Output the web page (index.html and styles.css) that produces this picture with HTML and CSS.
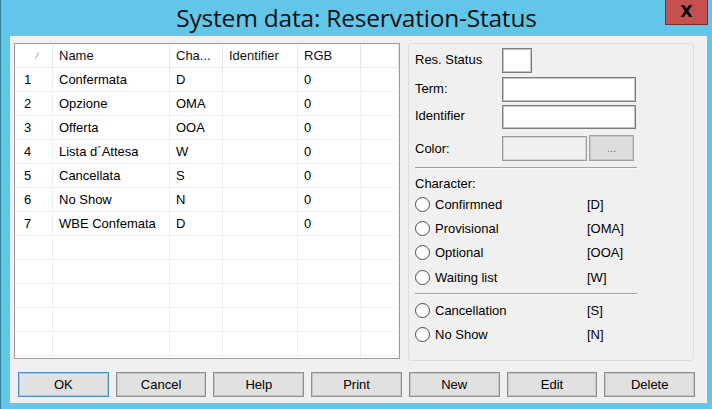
FILE: index.html
```html
<!DOCTYPE html>
<html>
<head>
<meta charset="utf-8">
<link rel="stylesheet" href="styles.css">
</head>
<body>
<div class="window">
  <div class="titlebar">
    <div></div>
    <div class="title">System data: Reservation-Status</div>
    <div class="tb-right"><div class="close">X</div></div>
  </div>
  <div class="client">
    <div class="main">
      <div class="grid">
        <div class="row head">
          <div class="cell num"><svg class="sort" width="4" height="7" viewBox="0 0 4 7"><path d="M0.5 6.5 L3.5 0.5" stroke="#9a9a9a" stroke-width="1"/></svg></div>
          <div class="cell">Name</div>
          <div class="cell">Cha...</div>
          <div class="cell">Identifier</div>
          <div class="cell">RGB</div>
          <div class="cell"></div>
        </div>
        <div class="row"><div class="cell num">1</div><div class="cell">Confermata</div><div class="cell">D</div><div class="cell"></div><div class="cell">0</div><div class="cell"></div></div>
        <div class="row"><div class="cell num">2</div><div class="cell">Opzione</div><div class="cell">OMA</div><div class="cell"></div><div class="cell">0</div><div class="cell"></div></div>
        <div class="row"><div class="cell num">3</div><div class="cell">Offerta</div><div class="cell">OOA</div><div class="cell"></div><div class="cell">0</div><div class="cell"></div></div>
        <div class="row"><div class="cell num">4</div><div class="cell">Lista d´Attesa</div><div class="cell">W</div><div class="cell"></div><div class="cell">0</div><div class="cell"></div></div>
        <div class="row"><div class="cell num">5</div><div class="cell">Cancellata</div><div class="cell">S</div><div class="cell"></div><div class="cell">0</div><div class="cell"></div></div>
        <div class="row"><div class="cell num">6</div><div class="cell">No Show</div><div class="cell">N</div><div class="cell"></div><div class="cell">0</div><div class="cell"></div></div>
        <div class="row"><div class="cell num">7</div><div class="cell">WBE Confemata</div><div class="cell">D</div><div class="cell"></div><div class="cell">0</div><div class="cell"></div></div>
        <div class="row"><div class="cell"></div><div class="cell"></div><div class="cell"></div><div class="cell"></div><div class="cell"></div><div class="cell"></div></div>
        <div class="row"><div class="cell"></div><div class="cell"></div><div class="cell"></div><div class="cell"></div><div class="cell"></div><div class="cell"></div></div>
        <div class="row"><div class="cell"></div><div class="cell"></div><div class="cell"></div><div class="cell"></div><div class="cell"></div><div class="cell"></div></div>
        <div class="row"><div class="cell"></div><div class="cell"></div><div class="cell"></div><div class="cell"></div><div class="cell"></div><div class="cell"></div></div>
        <div class="row"><div class="cell"></div><div class="cell"></div><div class="cell"></div><div class="cell"></div><div class="cell"></div><div class="cell"></div></div>
        <div class="row"><div class="cell"></div><div class="cell"></div><div class="cell"></div><div class="cell"></div><div class="cell"></div><div class="cell"></div></div>
      </div>
      <div class="panel">
        <div class="frow r1"><div class="flabel">Res. Status</div><div class="box small"></div></div>
        <div class="frow r2"><div class="flabel">Term:</div><div class="box wide"></div></div>
        <div class="frow r3"><div class="flabel">Identifier</div><div class="box wide"></div></div>
        <div class="frow r4"><div class="flabel">Color:</div><div class="box color"></div><div class="dots">...</div></div>
        <div class="sep s1"></div>
        <div class="charlabel">Character:</div>
        <div class="radios">
          <div class="radio"><span class="circle"></span><span class="rlabel">Confirmned</span><span class="code">[D]</span></div>
          <div class="radio"><span class="circle"></span><span class="rlabel">Provisional</span><span class="code">[OMA]</span></div>
          <div class="radio"><span class="circle"></span><span class="rlabel">Optional</span><span class="code">[OOA]</span></div>
          <div class="radio"><span class="circle"></span><span class="rlabel">Waiting list</span><span class="code">[W]</span></div>
        </div>
        <div class="sep s2"></div>
        <div class="radios r-bottom">
          <div class="radio"><span class="circle"></span><span class="rlabel">Cancellation</span><span class="code">[S]</span></div>
          <div class="radio"><span class="circle"></span><span class="rlabel">No Show</span><span class="code">[N]</span></div>
        </div>
      </div>
    </div>
    <div class="buttons">
      <div class="btn default">OK</div>
      <div class="btn">Cancel</div>
      <div class="btn">Help</div>
      <div class="btn">Print</div>
      <div class="btn">New</div>
      <div class="btn">Edit</div>
      <div class="btn">Delete</div>
    </div>
  </div>
</div>
</body>
</html>
```
FILE: styles.css
```css
* { box-sizing: border-box; }
html, body { margin: 0; padding: 0; }
body {
  font-family: "Liberation Sans", Arial, sans-serif;
  font-size: 13px;
  color: #000;
  background: #62c6ea;
}
.window {
  width: 712px;
  height: 409px;
  background: #62c6ea;
  border-left: 1px solid #3b7f98;
  display: flex;
  flex-direction: column;
  overflow: hidden;
}
.titlebar {
  height: 36px;
  flex: none;
  display: grid;
  grid-template-columns: 1fr auto 1fr;
}
.title {
  font-family: "Open Sans", "Noto Sans", sans-serif;
  font-size: 24.5px;
  line-height: 36px;
  color: #111;
  white-space: nowrap;
  letter-spacing: -0.2px;
}
.tb-right {
  display: flex;
  justify-content: flex-end;
  align-items: flex-start;
  padding-right: 4px;
}
.close {
  width: 43px;
  height: 25px;
  background: #c75050;
  border: 1px solid #7a2f2f;
  border-top: none;
  color: #000;
  font-family: "DejaVu Sans", sans-serif;
  font-weight: bold;
  font-size: 16px;
  line-height: 24px;
  text-align: center;
}
.client {
  flex: 1;
  margin: 0 5px 6px 9px;
  background: #f0f0f0;
  padding: 7px 0 0 4px;
}
.main {
  display: flex;
  align-items: flex-start;
}
.grid {
  width: 386px;
  height: 316px;
  border: 1px solid #9c9c9c;
  background: #fff;
  overflow: hidden;
}
.row {
  display: grid;
  grid-template-columns: 38px 117px 53px 75px 63px 38px;
  height: 24px;
  border-bottom: 1px solid #efefef;
}
.row.head { border-bottom: 1px solid #ececec; }
.cell {
  border-right: 1px solid #efefef;
  padding-left: 6px;
  line-height: 23px;
  white-space: nowrap;
  overflow: hidden;
}
.head .cell { border-right-color: #e6e6e6; color: #111; }
.cell.num { padding-left: 9px; }
.head .cell.num { padding-left: 20px; }
.sort { vertical-align: middle; margin-top: -2px; }
.panel {
  margin-left: 8px;
  width: 286px;
  height: 318px;
  border: 1px solid #dcdcdc;
  border-radius: 3px;
  padding-left: 6px;
}
.frow {
  display: flex;
  align-items: center;
  height: 25px;
}
.r1 { margin-top: 4px; }
.r2 { margin-top: 4px; }
.r3 { margin-top: 3px; height: 24px; }
.r4 { margin-top: 6px; height: 26px; }
.flabel { width: 87px; }
.r1 .flabel, .r2 .flabel, .r3 .flabel { padding-bottom: 3px; }
.box {
  height: 25px;
  background: #fff;
  border: 1px solid #7d7d7d;
  box-shadow: inset 0 0 0 1px #c4c4c4;
}
.r3 .box { height: 24px; }
.box.small { width: 30px; }
.box.wide { width: 134px; }
.box.color {
  width: 85px;
  background: #f0f0f0;
  border-color: #9a9a9a;
  box-shadow: inset 0 0 0 1px #d4d4d4;
}
.dots {
  margin-left: 2px;
  width: 45px;
  height: 26px;
  background: #dcdcdc;
  border: 1px solid #a2a2a2;
  box-shadow: inset 0 0 0 1px #c8c8c8;
  color: #777;
  font-size: 11px;
  text-align: center;
  line-height: 24px;
}
.sep {
  width: 222px;
  height: 2px;
  border-top: 1px solid #a0a0a0;
  border-bottom: 1px solid #fafafa;
}
.s1 { margin-top: 6px; }
.charlabel {
  margin-top: 7px;
  line-height: 16px;
}
.radios { display: flex; flex-direction: column; }
.radio {
  display: flex;
  align-items: center;
  height: 24.3px;
}
.circle {
  width: 15px;
  height: 15px;
  border-radius: 50%;
  border: 1px solid #4a4a4a;
  background: #fff;
  flex: none;
}
.rlabel {
  margin-left: 5px;
  width: 152px;
}
.s2 { margin-top: 4px; }
.r-bottom { margin-top: 3px; }
.buttons {
  display: flex;
  gap: 7px;
  width: 677px;
  margin-top: 11px;
  margin-left: 4px;
}
.btn {
  flex: 1;
  height: 25px;
  background: #e1e1e1;
  border: 1px solid #8f8f8f;
  box-shadow: inset 0 0 0 1px #c6c6c6;
  text-align: center;
  line-height: 23px;
}
.btn.default {
  border-color: #4f8ccc;
  box-shadow: inset 0 0 0 1px #a9c7e6;
}
```
